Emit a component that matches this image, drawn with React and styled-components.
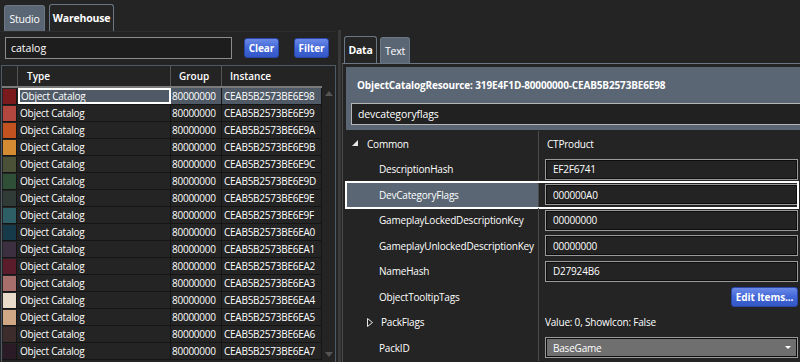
import React from "react";
import styled, { createGlobalStyle } from "styled-components";

const Global = createGlobalStyle`
  body {
    margin: 0;
    background: #242424;
    font-family: "Open Sans", "Noto Sans", sans-serif;
    font-size: 10px;
    color: #f2f2f2;
  }
`;

const SLATE = "#5a6673";

const Screen = styled.div`
  display: flex;
  width: 800px;
  height: 362px;
  overflow: hidden;
  background: #242424;
`;

const LeftPane = styled.div`
  width: 336px;
  display: flex;
  flex-direction: column;
`;

const TabStrip = styled.div`
  display: flex;
  align-items: flex-end;
  gap: ${(p) => p.gap || 4}px;
  height: ${(p) => p.h}px;
  flex-shrink: 0;
  padding-left: ${(p) => p.pl}px;
  box-sizing: border-box;
`;

const Tab = styled.div`
  width: ${(p) => p.w}px;
  height: ${(p) => (p.active ? 27 : 26)}px;
  box-sizing: border-box;
  display: flex;
  align-items: center;
  justify-content: center;
  border-radius: 3px 3px 0 0;
  font-size: 10.5px;
  letter-spacing: -0.2px;
  font-weight: ${(p) => (p.active ? 700 : 400)};
  color: #fff;
  background: ${(p) => (p.active ? "#252525" : SLATE)};
  border: 1px solid #6b7784;
  border-bottom: none;
`;

const SearchRow = styled.div`
  display: flex;
  align-items: center;
  padding: 5px 0 0 5px;
  height: 27px;
  box-sizing: border-box;
  border-top: 1px solid #2e2e2e;
`;

const SearchBox = styled.div`
  width: 227px;
  flex-shrink: 0;
  height: 22px;
  box-sizing: border-box;
  border: 1px solid #8c8c8c;
  background: #1d1d1d;
  padding-left: 5px;
  display: flex;
  align-items: center;
  font-size: 10.5px;
  color: #fff;
  margin-right: 12px;
`;

const BlueButton = styled.div`
  width: ${(p) => p.w || 35}px;
  height: 20px;
  flex-shrink: 0;
  box-sizing: border-box;
  display: flex;
  align-items: center;
  justify-content: center;
  border-radius: 3px;
  border: 1px solid #2a45a8;
  background: linear-gradient(#6b8ae8, #4166d6 50%, #3457c6);
  font-weight: 700;
  font-size: 10px;
  letter-spacing: -0.1px;
  color: #fff;
  margin-left: ${(p) => p.ml || 0}px;
`;

const Table = styled.div`
  margin: 7px 0 0 1px;
  flex: 1;
  border: 1px solid #4d5b69;
  border-bottom: none;
  display: flex;
  overflow: hidden;
`;

const TableBody = styled.div`
  width: 320px;
  display: flex;
  flex-direction: column;
`;

const HeaderRow = styled.div`
  display: grid;
  grid-template-columns: 16px 153px 51px 100px;
  height: 20px;
  border-bottom: 2px solid #7a7a7a;
`;

const HeadCell = styled.div`
  border-right: 1px solid #555;
  display: flex;
  align-items: center;
  padding-left: ${(p) => p.pl || 0}px;
  font-weight: 600;
  font-size: 10px;
  color: #fff;
  &:last-child { border-right: none; }
`;

const Row = styled.div`
  display: grid;
  grid-template-columns: 16px 153px 51px 100px;
  height: 17px;
  box-sizing: border-box;
  border-bottom: 1px solid #151515;
`;

const Swatch = styled.div`
  margin: 1px 1px 0 1px;
  background: ${(p) => p.c};
  border-right: 1px solid #151515;
`;

const Cell = styled.div`
  display: flex;
  align-items: center;
  padding-left: ${(p) => p.pl || 2}px;
  box-sizing: border-box;
  background: ${(p) => (p.sel ? "#4f5a66" : "transparent")};
  border: ${(p) => (p.focus ? "2px solid #fff" : "none")};
  border-right: ${(p) => (p.focus ? "2px solid #fff" : "1px solid #151515")};
  color: #fff;
  font-size: 10px;
  letter-spacing: -0.25px;
  white-space: nowrap;
  overflow: hidden;
`;

const ScrollBar = styled.div`
  flex: 1;
  display: flex;
  flex-direction: column;
  justify-content: space-between;
  align-items: center;
  padding: 25px 0 5px;
`;

const Arrow = styled.div`
  width: 0;
  height: 0;
  border-left: 4px solid transparent;
  border-right: 4px solid transparent;
  ${(p) => (p.down ? "border-top: 5px solid #555;" : "border-bottom: 5px solid #555;")}
`;

const Splitter = styled.div`
  width: 6px;
  display: flex;
  justify-content: center;
  &::before {
    content: "";
    width: 3px;
    margin-top: 30px;
    background: #3a3a3a;
  }
`;

const RightPane = styled.div`
  flex: 1;
  display: flex;
  flex-direction: column;
`;

const TabPanel = styled.div`
  flex: 1;
  border-top: 1px solid #6b7784;
  border-left: 1px solid #4c4c4c;
  padding: 3px 0 0 3px;
  display: flex;
  flex-direction: column;
`;

const Header = styled.div`
  background: ${SLATE};
  padding: 0 0 5px 5px;
  display: flex;
  flex-direction: column;
`;

const Title = styled.div`
  height: 36px;
  display: flex;
  align-items: center;
  padding-left: 6px;
  font-weight: 700;
  font-size: 10px;
  letter-spacing: -0.15px;
  color: #fff;
`;

const FilterBox = styled.div`
  height: 22px;
  box-sizing: border-box;
  border: 1px solid #b5b5b5;
  border-right: none;
  background: #212121;
  display: flex;
  align-items: center;
  padding-left: 6px;
  font-size: 10.5px;
  letter-spacing: -0.1px;
  color: #fff;
`;

const PropGrid = styled.div`
  display: flex;
  flex-direction: column;
  padding-top: 1px;
`;

const PropRow = styled.div`
  display: grid;
  grid-template-columns: 192px 1px 1fr;
  height: 25.5px;
  box-sizing: border-box;
  ${(p) => p.sel && "outline: 2px solid #fff; outline-offset: -1px; margin-right: 2px;"}
`;

const Label = styled.div`
  display: flex;
  align-items: center;
  padding-left: ${(p) => p.pl}px;
  gap: 8px;
  background: ${(p) => (p.sel ? SLATE : "transparent")};
  margin-left: ${(p) => (p.sel ? 1 : 0)}px;
  color: #fff;
  font-size: 10px;
  letter-spacing: -0.2px;
  white-space: nowrap;
`;

const Divider = styled.div`
  background: #4a4a4a;
`;

const Value = styled.div`
  display: flex;
  align-items: center;
  justify-content: ${(p) => (p.end ? "flex-end" : "flex-start")};
  padding: 0 ${(p) => (p.sel ? 0 : 2)}px 0 ${(p) => p.pl || 6}px;
  color: #fff;
  font-size: 10px;
  letter-spacing: -0.2px;
`;

const ValueBox = styled.div`
  flex: 1;
  height: 21px;
  box-sizing: border-box;
  border: 1px solid #9a9a9a;
  box-shadow: inset 0 0 0 1px #0e0e0e;
  background: ${(p) => (p.gray ? "#6f6f6f" : "#232323")};
  display: flex;
  align-items: center;
  justify-content: space-between;
  padding: 0 6px 0 7px;
  color: #fff;
  font-size: 10px;
`;

const Caret = styled.div`
  width: 0;
  height: 0;
  border-left: 3px solid transparent;
  border-right: 3px solid transparent;
  border-top: 3px solid #fff;
`;

const swatches = [
  "#7b1a1c", "#b1473f", "#c2521f", "#d48b31", "#4b5137", "#2f4f36",
  "#303b37", "#2e5f67", "#173a4b", "#3c2f3f", "#5a1b2b", "#a66f6c",
  "#eadccb", "#d1a886", "#3c2c2b", "#2b1b26",
];
const suffixes = ["98", "99", "9A", "9B", "9C", "9D", "9E", "9F", "A0", "A1", "A2", "A3", "A4", "A5", "A6", "A7"];

const ExpandedIcon = () => (
  <svg width="7" height="7" viewBox="0 0 7 7">
    <polygon points="6,0 6,6 0,6" fill="#e8e8e8" />
  </svg>
);

const CollapsedIcon = () => (
  <svg width="6" height="9" viewBox="0 0 6 9">
    <polygon points="0.5,0.5 5.5,4.5 0.5,8.5" fill="none" stroke="#e8e8e8" strokeWidth="1" />
  </svg>
);

const props = [
  { name: "DescriptionHash", value: "EF2F6741", box: true },
  { name: "DevCategoryFlags", value: "000000A0", box: true, sel: true },
  { name: "GameplayLockedDescriptionKey", value: "00000000", box: true },
  { name: "GameplayUnlockedDescriptionKey", value: "00000000", box: true },
  { name: "NameHash", value: "D27924B6", box: true },
  { name: "ObjectTooltipTags", button: true },
  { name: "PackFlags", text: "Value: 0, ShowIcon: False", collapsed: true },
  { name: "PackID", value: "BaseGame", box: true, drop: true },
];

export default function App() {
  return (
    <Screen>
      <Global />
      <LeftPane>
        <TabStrip h={31} pl={4}>
          <Tab w={41}>Studio</Tab>
          <Tab w={65} active>Warehouse</Tab>
        </TabStrip>
        <SearchRow>
          <SearchBox>catalog</SearchBox>
          <BlueButton>Clear</BlueButton>
          <BlueButton ml={15}>Filter</BlueButton>
        </SearchRow>
        <Table>
          <TableBody>
            <HeaderRow>
              <HeadCell />
              <HeadCell pl={9}>Type</HeadCell>
              <HeadCell pl={8}>Group</HeadCell>
              <HeadCell pl={8}>Instance</HeadCell>
            </HeaderRow>
            {swatches.map((c, i) => (
              <Row key={i}>
                <Swatch c={c} />
                <Cell sel={i === 0} focus={i === 0} pl={i === 0 ? 1 : 2}>Object Catalog</Cell>
                <Cell sel={i === 0} pl={1}>80000000</Cell>
                <Cell sel={i === 0} pl={2}>CEAB5B2573BE6E{suffixes[i]}</Cell>
              </Row>
            ))}
          </TableBody>
          <ScrollBar>
            <Arrow />
            <Arrow down />
          </ScrollBar>
        </Table>
      </LeftPane>
      <Splitter />
      <RightPane>
        <TabStrip h={63} pl={2} gap={3}>
          <Tab w={33} active>Data</Tab>
          <Tab w={30}>Text</Tab>
        </TabStrip>
        <TabPanel>
          <Header>
            <Title>ObjectCatalogResource: 319E4F1D-80000000-CEAB5B2573BE6E98</Title>
            <FilterBox>devcategoryflags</FilterBox>
          </Header>
          <PropGrid>
            <PropRow>
              <Label pl={6}>
                <ExpandedIcon />
                Common
              </Label>
              <Divider />
              <Value pl={8}>CTProduct</Value>
            </PropRow>
            {props.map((p) => (
              <PropRow key={p.name} sel={p.sel}>
                <Label pl={p.collapsed ? 21 : p.sel ? 32 : 33} sel={p.sel}>
                  {p.collapsed && <CollapsedIcon />}
                  {p.name}
                </Label>
                <Divider />
                <Value end={p.button} sel={p.sel}>
                  {p.box && (
                    <ValueBox gray={p.drop}>
                      {p.value}
                      {p.drop && <Caret />}
                    </ValueBox>
                  )}
                  {p.button && <BlueButton w={67}>Edit Items...</BlueButton>}
                  {p.text}
                </Value>
              </PropRow>
            ))}
          </PropGrid>
        </TabPanel>
      </RightPane>
    </Screen>
  );
}
